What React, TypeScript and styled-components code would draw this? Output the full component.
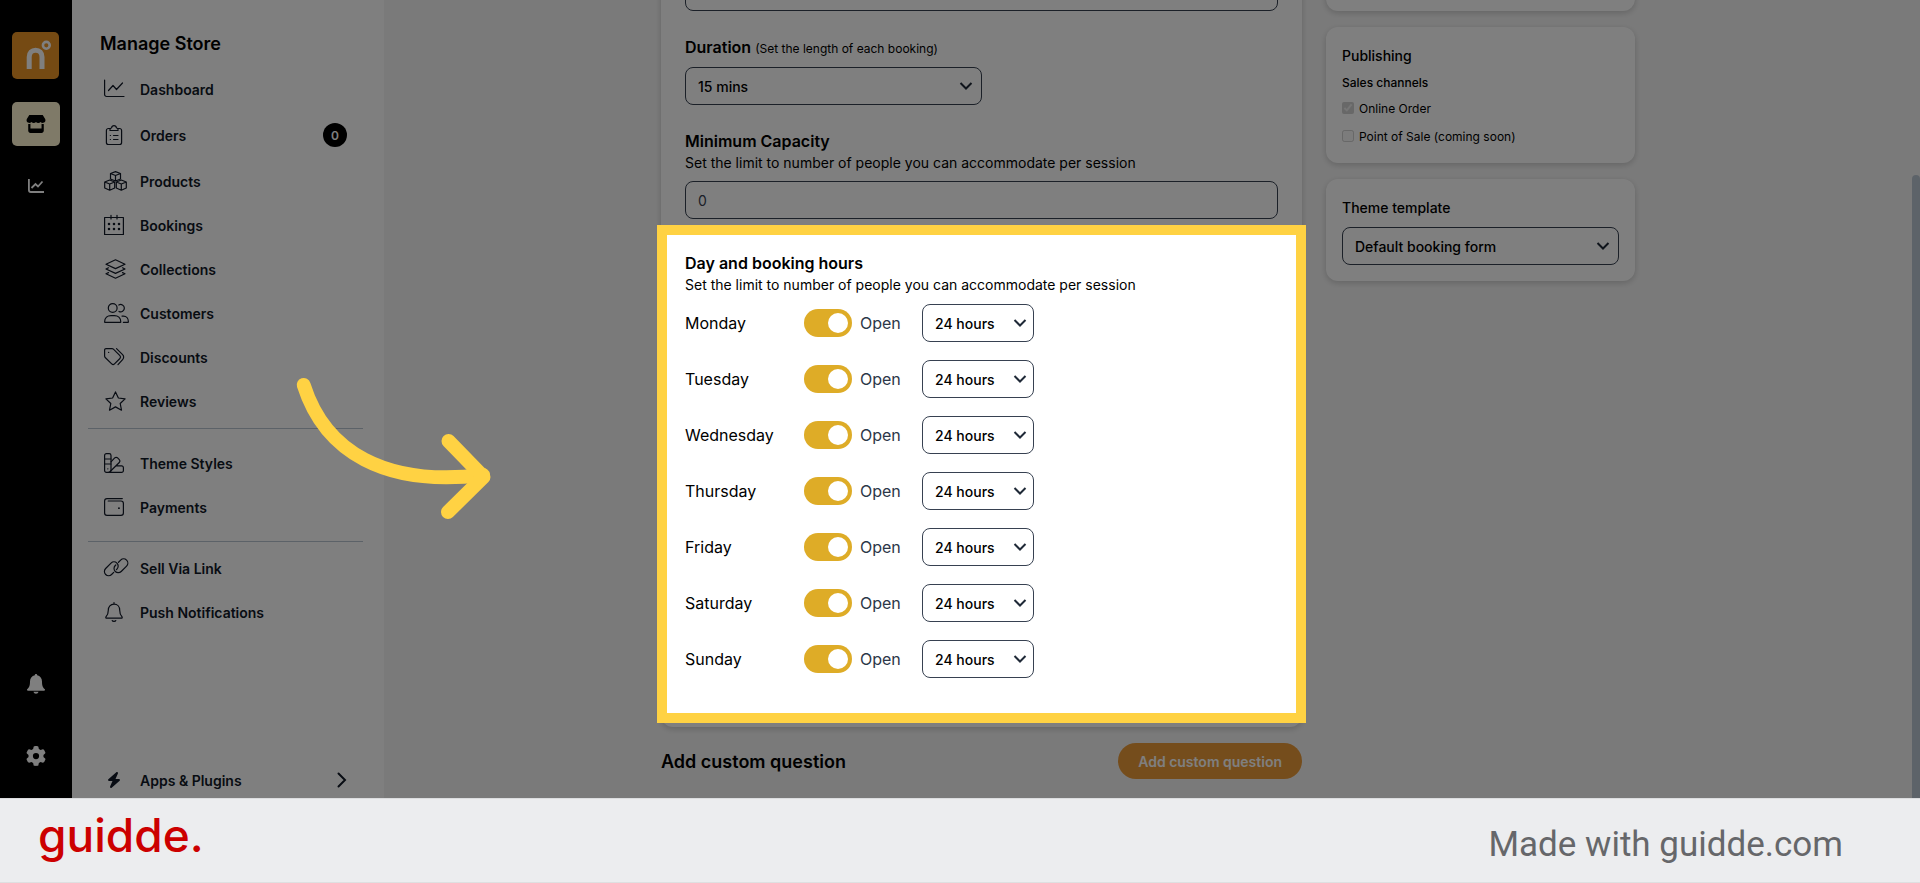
import React from 'react';
import styled, { createGlobalStyle } from 'styled-components';
import { FaGear, FaBolt, FaStore } from 'react-icons/fa6';

const GlobalStyle = createGlobalStyle`
  *, *::before, *::after { box-sizing: border-box; }
  body {
    margin: 0;
    font-family: Inter, "Liberation Sans", sans-serif;
    font-optical-sizing: none;
    color: #000;
    background: #ecedef;
  }
  h1, h2, h3, p { margin: 0; }
  button, input, select { font: inherit; color: inherit; }
  a { color: inherit; text-decoration: none; }
`;

const Page = styled.div`
  display: flex;
  flex-direction: column;
  height: 100vh;
`;

const Store = styled.div`
  position: relative;
  display: flex;
  flex: 1;
  min-height: 0;
  overflow: hidden;
  background: #f5f5f5;
`;

const Rail = styled.nav`
  display: flex;
  flex-direction: column;
  align-items: center;
  width: 72px;
  padding: 32px 0 20px;
  background: #000;
  color: #fff;
`;

const RailLink = styled.a<{ $active?: boolean }>`
  display: grid;
  place-items: center;
  width: 48px;
  height: 44px;
  margin-bottom: 18px;
  border-radius: 5px;
  color: ${p => (p.$active ? '#000' : '#fff')};
  background: ${p => (p.$active ? '#fff5d0' : 'transparent')};
`;

const Brand = styled.a`
  width: 48px;
  height: 48px;
  margin-bottom: 22px;
  svg { display: block; }
`;

const RailFoot = styled.div`
  display: flex;
  flex-direction: column;
  gap: 28px;
  margin-top: auto;
  a { margin: 0; }
`;

const Sidebar = styled.nav`
  display: flex;
  flex-direction: column;
  width: 312px;
  padding: 31px 21px 0 16px;
  background: #fff;
`;

const SideTitle = styled.h2`
  padding-left: 12px;
  margin-bottom: 10px;
  font-size: 18px;
  line-height: 26px;
  font-weight: 600;
`;

const NavItem = styled.a<{ $tall?: boolean }>`
  display: flex;
  align-items: center;
  height: ${p => (p.$tall ? 48 : 44)}px;
  padding: 0 16px;
  font-size: 14px;
  font-weight: 600;
  color: #111827;
`;

const NavIcon = styled.span<{ $inset?: boolean }>`
  display: flex;
  width: 36px;
  padding-left: ${p => (p.$inset ? 2 : 0)}px;
  svg { display: block; overflow: visible; }
`;

const Badge = styled.span`
  display: grid;
  place-items: center;
  width: 24px;
  height: 24px;
  margin-left: auto;
  border-radius: 50%;
  background: #000;
  color: #fff;
  font-size: 12px;
`;

const Rule = styled.hr<{ $wide?: boolean }>`
  width: 100%;
  margin: ${p => (p.$wide ? '12px 0 4px' : '5px 0 12px')};
  border: 0;
  border-top: 1px solid #b9c4d0;
`;

const Apps = styled.div`
  margin-top: auto;
  margin-bottom: -4px;
  a > svg { margin-left: auto; }
`;

const Main = styled.main`
  flex: 1;
  display: flex;
  justify-content: center;
  min-width: 0;
  padding: 0 24px;
`;

const Columns = styled.div`
  display: grid;
  grid-template-columns: minmax(0, 1fr) 309px;
  gap: 24px;
  align-items: start;
  width: 100%;
  max-width: 974px;
  margin-top: -51px;
`;

const Card = styled.section`
  border-radius: 12px;
  background: #fff;
  box-shadow: 0 2px 6px rgba(0, 0, 0, 0.18);
`;

const FormCard = styled(Card)`
  padding: 24px 24px 4px;
`;

const SideStack = styled.aside`
  display: flex;
  flex-direction: column;
  gap: 16px;
`;

const SideCard = styled(Card)`
  padding: 18px 16px 13px;
`;

const TopCard = styled(Card)`
  height: 62px;
`;

const Field = styled.div`
  display: flex;
  flex-direction: column;
  margin-bottom: 24px;
  &:last-of-type { margin-bottom: 6px; }
`;

const Label = styled.label`
  font-size: 16px;
  line-height: 24px;
  font-weight: 600;
`;

const Small = styled.span`
  font-size: 12px;
  font-weight: 400;
`;

const Hint = styled.p`
  margin-bottom: 8px;
  font-size: 14px;
  line-height: 20px;
`;

const controlBox = `
  height: 38px;
  border: 1px solid #374151;
  border-radius: 8px;
  background: #fff;
  font-size: 14px;
  outline: none;
`;

const TextInput = styled.input`
  ${controlBox}
  width: 100%;
  padding: 0 12px;
  color: #374151;
`;

const SelectWrap = styled.div<{ $width: string; $compact?: boolean }>`
  display: grid;
  align-items: center;
  width: ${p => p.$width};
  select, svg { grid-area: 1 / 1; }
  svg {
    justify-self: end;
    margin-right: ${p => (p.$compact ? 7 : 9)}px;
    pointer-events: none;
  }
  ${Label} + & { margin-top: 6px; }
`;

const SelectBox = styled.select`
  ${controlBox}
  appearance: none;
  width: 100%;
  padding: 0 28px 0 12px;
  font-weight: 500;
`;

const Spotlight = styled.section`
  position: relative;
  z-index: 1;
  margin: 0 -28px;
  padding: 16px 18px 35px;
  border: 10px solid #ffd243;
  background: #fff;
  box-shadow: 0 0 0 4000px rgba(0, 0, 0, 0.5);
`;

const SpotTitle = styled.h3`
  font-size: 16px;
  line-height: 24px;
  font-weight: 600;
`;

const Days = styled.div`
  display: flex;
  flex-direction: column;
  gap: 18px;
  margin-top: 9px;
`;

const DayRow = styled.div`
  display: grid;
  grid-template-columns: 119px 118px 112px;
  align-items: center;
  font-size: 16px;
`;

const ToggleLabel = styled.label`
  display: flex;
  align-items: center;
  gap: 8px;
  color: #2d3748;
`;

const Toggle = styled.input`
  appearance: none;
  display: flex;
  align-items: center;
  width: 48px;
  height: 28px;
  margin: 0;
  padding: 4px;
  border-radius: 14px;
  background: #a0a0a0;
  &::before {
    content: '';
    width: 20px;
    height: 20px;
    border-radius: 50%;
    background: #fff;
  }
  &:checked { justify-content: flex-end; background: #deac27; }
`;

const QuestionBar = styled.div`
  display: flex;
  align-items: center;
  justify-content: space-between;
  margin-top: 16px;
`;

const QuestionTitle = styled.h2`
  font-size: 18px;
  font-weight: 600;
`;

const AddButton = styled.button`
  height: 36px;
  padding: 0 20px;
  border: 0;
  border-radius: 18px;
  background: #ea9a38;
  color: #fff;
  font-size: 14px;
  font-weight: 600;
`;

const CardTitle = styled.h3`
  font-size: 14px;
  line-height: 22px;
  font-weight: 500;
`;

const SubTitle = styled.p`
  margin: 7px 0 2px;
  font-size: 12px;
  line-height: 18px;
  font-weight: 500;
`;

const CheckRow = styled.label`
  display: flex;
  align-items: center;
  gap: 5px;
  height: 28px;
  font-size: 12px;
  input { width: 12px; height: 12px; margin: 0; }
`;

const TemplateSelect = styled.div`
  margin: 8px 0 3px;
`;

const ScrollTrack = styled.div`
  display: flex;
  width: 8px;
  padding-top: 175px;
`;

const ScrollThumb = styled.div`
  flex: 1;
  border-radius: 4px 4px 0 0;
  background: #bbc6d2;
`;

const Pointer = styled.svg`
  position: absolute;
  z-index: 2;
  left: 290px;
  top: 370px;
`;

const Footer = styled.footer`
  position: relative;
  z-index: 3;
  display: flex;
  align-items: center;
  justify-content: space-between;
  height: 85px;
  padding: 0 77px 0 38px;
  border-top: 1px solid #dcdddf;
  border-bottom: 1px solid #dedfe0;
  background: #ecedef;
`;

const GuiddeMark = styled.a`
  margin-bottom: 12px;
  font-size: 46px;
  line-height: 56px;
  font-weight: 500;
  && { color: #c00; }
`;

const Credit = styled.p`
  margin-top: 8px;
  font-family: Roboto, sans-serif;
  font-size: 35px;
  line-height: 42px;
  color: #66676a;
`;

type LineIconProps = { width?: number; children: React.ReactNode };

function LineIcon({ width = 20, children }: LineIconProps) {
  return (
    <svg width={width} height="20" viewBox={`0 0 ${width} 20`} fill="none" stroke="currentColor"
      strokeWidth="1.2" strokeLinecap="round" strokeLinejoin="round" aria-hidden="true">
      {children}
    </svg>
  );
}

const icons = {
  dashboard: <LineIcon><path d="M.6 1v14.5a2 2 0 0 0 2 2H20M4.500 11.500l4.500-5 3.500 4 6-6.500" /></LineIcon>,
  orders: (
    <LineIcon>
      <path d="M6.500 3.500H4.400a2 2 0 0 0-2 2v12a2 2 0 0 0 2 2h11.200a2 2 0 0 0 2-2v-12a2 2 0 0 0-2-2h-2.100" />
      <path d="M6 5.500h8v-1a1.500 1.500 0 0 0-1.500-1.500C12.200 1.500 11.300.7 10 .7S7.800 1.500 7.500 3A1.500 1.500 0 0 0 6 4.500z" />
      <path d="M9.500 10.500H14M9.500 14.500H14M6.300 10.500h.2M6.300 14.500h.2" />
    </LineIcon>
  ),
  products: (
    <LineIcon width={23}>
      <path d="M11.500.6l5 1.900v5.500l-5 2-5-2V2.500zM6.500 2.500l5 2 5-2M11.500 4.500V10" />
      <path d="M5.700 9l5 2v6l-5 2.200-5-2.200v-6zM.7 11l5 2 5-2M5.700 13v6" />
      <path d="M17.300 9l5 2v6l-5 2.200-5-2.200v-6zM12.300 11l5 2 5-2M17.300 13v6" />
    </LineIcon>
  ),
  bookings: (
    <LineIcon>
      <path d="M.6 2.500h18.800v17H.6zM7 .3V4M13 .3V4" />
      <path strokeWidth="2.600" d="M5 9h.01M10 9h.01M15 9h.01M5 14h.01M10 14h.01M15 14h.01" />
    </LineIcon>
  ),
  collections: (
    <LineIcon width={23}>
      <path d="M11.500.8l9.500 4.400-9.500 4.400L2 5.200zM4.500 8.800L2 10l9.500 4.400L21 10l-2.500-1.200M4.500 13.600L2 14.800l9.500 4.400 9.500-4.400-2.500-1.200" />
    </LineIcon>
  ),
  customers: (
    <LineIcon width={25}>
      <circle cx="8.700" cy="5" r="4.400" />
      <path d="M.6 19c0-4 2.900-6.400 6.400-6.400h3.400c3.500 0 6.400 2.400 6.400 6.400 0 .3-.2.4-.5.4H1c-.3 0-.4-.1-.4-.4zM14.800 2a3.700 3.700 0 1 1 .2 6.500M18 13.100h1.500c2.800 0 4.900 2.300 4.900 5.700 0 .4-.2.600-.5.600h-4.500" />
    </LineIcon>
  ),
  discounts: (
    <LineIcon>
      <path d="M.6 3v6c0 .6.200 1.100.6 1.500l6.500 6.400c.8.8 2 .8 2.800 0l5.400-5.400c.8-.8.8-2 0-2.800L9.400 2.200A2 2 0 0 0 8 1.600H2A1.400 1.400 0 0 0 .6 3zM4.600 5.400h.1" />
      <path d="M12.500 1.600l6.100 6a3.500 3.500 0 0 1 0 5L14 17.600" />
    </LineIcon>
  ),
  reviews: (
    <LineIcon width={23}>
      <path d="M11.500.9l2.900 6.100 6.700.9-4.900 4.600 1.300 6.700-6-3.300-6 3.300 1.300-6.700L1.900 7.900l6.700-.9z" />
    </LineIcon>
  ),
  styles: (
    <LineIcon>
      <rect x=".6" y=".6" width="6.400" height="18.800" rx="1.800" />
      <path d="M.6 6H7M.6 11H7M7 8.800l3.700-3.900a2 2 0 0 1 2.900 0l1.700 1.800a2 2 0 0 1 0 2.800L5.400 19.200M12.200 12.900h5.400a1.800 1.800 0 0 1 1.800 1.800v2.900a1.800 1.800 0 0 1-1.800 1.800H4.500M3.800 15.800h.1" />
    </LineIcon>
  ),
  payments: (
    <LineIcon>
      <path d="M18.300 1.600H3A2.400 2.400 0 0 0 .6 4v12A2.400 2.400 0 0 0 3 18.400h14a2.400 2.400 0 0 0 2.400-2.400V6.400A2.400 2.400 0 0 0 17 4H4.200" />
      <path strokeWidth="1.800" d="M14.900 11.200h.1" />
    </LineIcon>
  ),
  link: (
    <LineIcon width={24}>
      <g transform="translate(7.300 10.800) rotate(-45)">
        <path d="M-.8 4.200H-3.800A4.200 4.200 0 0 1-3.800-4.200H3.800A4.200 4.200 0 0 1 3.800 4.200H3" />
        <path d="M9.700.5H12.700A4.200 4.200 0 0 1 12.700 8.900H5.100A4.200 4.200 0 0 1 5.100.5H5.900" />
      </g>
    </LineIcon>
  ),
  push: (
    <LineIcon>
      <path d="M10 .6v1.600M10 2.200c-3.500 0-5.700 2.600-5.700 6 0 3.200-.6 4.600-2.200 6.500-.6.700-.3 1.500.6 1.500h14.600c.9 0 1.200-.8.6-1.500-1.600-1.900-2.200-3.300-2.200-6.500 0-3.400-2.200-6-5.700-6zM8.200 18.500c.4 1.200 3.200 1.200 3.600 0" />
    </LineIcon>
  ),
};

type Item = { label: string; icon: React.ReactNode; badge?: string };

const storeItems: Item[] = [
  { label: 'Dashboard', icon: icons.dashboard },
  { label: 'Orders', icon: icons.orders, badge: '0' },
  { label: 'Products', icon: icons.products },
  { label: 'Bookings', icon: icons.bookings },
  { label: 'Collections', icon: icons.collections },
  { label: 'Customers', icon: icons.customers },
  { label: 'Discounts', icon: icons.discounts },
  { label: 'Reviews', icon: icons.reviews },
];
const setupItems: Item[] = [
  { label: 'Theme Styles', icon: icons.styles },
  { label: 'Payments', icon: icons.payments },
];
const shareItems: Item[] = [
  { label: 'Sell Via Link', icon: icons.link },
  { label: 'Push Notifications', icon: icons.push },
];
const days = ['Monday', 'Tuesday', 'Wednesday', 'Thursday', 'Friday', 'Saturday', 'Sunday'];

function NavList({ items }: { items: Item[] }) {
  return (
    <>
      {items.map(item => (
        <NavItem key={item.label} href="#" $tall={!!item.badge}>
          <NavIcon>{item.icon}</NavIcon>
          {item.label}
          {item.badge && <Badge>{item.badge}</Badge>}
        </NavItem>
      ))}
    </>
  );
}

type SelectProps = { id?: string; label?: string; width: string; option: string; compact?: boolean };

function Select({ id, label, width, option, compact }: SelectProps) {
  return (
    <SelectWrap $width={width} $compact={compact}>
      <SelectBox id={id} aria-label={label}>
        <option>{option}</option>
      </SelectBox>
      <svg width="14" height="10" viewBox="0 0 14 10" fill="none" stroke="#1f2937" strokeWidth="2" aria-hidden="true">
        <path d="M1.500 2L7 7.500 12.500 2" />
      </svg>
    </SelectWrap>
  );
}

export default function App() {
  return (
    <>
      <GlobalStyle />
      <Page>
        <Store>
          <Rail aria-label="Main">
            <Brand href="#" aria-label="Home">
              <svg width="48" height="48" viewBox="0 0 48 48" fill="none" stroke="#fff">
                <rect width="47" height="47" rx="5" fill="#ea9426" stroke="none" />
                <path d="M17.200 37V25c0-4.200 2.600-6.800 6.400-6.800S30 20.800 30 25v12" strokeWidth="5" />
                <circle cx="34.300" cy="13.300" r="3.400" strokeWidth="2.600" />
              </svg>
            </Brand>
            <RailLink href="#" $active aria-label="Store"><FaStore size={20} /></RailLink>
            <RailLink href="#" aria-label="Analytics">
              <svg width="16" height="14" viewBox="0 0 16 14" fill="none" stroke="currentColor" strokeWidth="1.800">
                <path d="M.9 0v11a2 2 0 0 0 2 2H16M3.500 9l4-4 2.500 2.500L14.500 2.500" />
              </svg>
            </RailLink>
            <RailFoot>
              <RailLink href="#" aria-label="Notifications">
                <svg width="18" height="20" viewBox="0 0 18 20" fill="currentColor">
                  <path d="M9 0c.7 0 1.200.5 1.200 1.300 3 .6 4.800 3 4.800 6.200 0 4.300.8 6 2.600 7.500.8.700.4 1.700-.6 1.700H1c-1 0-1.400-1-.6-1.700C2.200 13.500 3 11.800 3 7.500c0-3.200 1.800-5.600 4.800-6.200C7.800.5 8.300 0 9 0zM6.500 17.800h5c-.2 1.300-1.200 2-2.500 2s-2.300-.7-2.500-2z" />
                </svg>
              </RailLink>
              <RailLink href="#" aria-label="Settings"><FaGear size={20} /></RailLink>
            </RailFoot>
          </Rail>

          <Sidebar aria-label="Manage Store">
            <SideTitle>Manage Store</SideTitle>
            <NavList items={storeItems} />
            <Rule />
            <NavList items={setupItems} />
            <Rule $wide />
            <NavList items={shareItems} />
            <Apps>
              <NavItem href="#">
                <NavIcon $inset><FaBolt size={16} /></NavIcon>
                Apps &amp; Plugins
                <svg width="10" height="16" viewBox="0 0 10 16" fill="none" stroke="currentColor" strokeWidth="2" strokeLinecap="round">
                  <path d="M1.500 1.500L8 8l-6.500 6.500" />
                </svg>
              </NavItem>
            </Apps>
          </Sidebar>

          <Main>
            <Columns>
              <div>
                <FormCard>
                  <Field>
                    <TextInput aria-label="Booking name" />
                  </Field>
                  <Field>
                    <Label htmlFor="duration">Duration <Small>(Set the length of each booking)</Small></Label>
                    <Select id="duration" width="50%" option="15 mins" />
                  </Field>
                  <Field>
                    <Label htmlFor="capacity">Minimum Capacity</Label>
                    <Hint>Set the limit to number of people you can accommodate per session</Hint>
                    <TextInput id="capacity" defaultValue="0" />
                  </Field>
                  <Spotlight>
                    <SpotTitle>Day and booking hours</SpotTitle>
                    <Hint>Set the limit to number of people you can accommodate per session</Hint>
                    <Days>
                      {days.map(day => (
                        <DayRow key={day}>
                          <span>{day}</span>
                          <ToggleLabel>
                            <Toggle type="checkbox" defaultChecked />
                            Open
                          </ToggleLabel>
                          <Select label={`${day} hours`} width="100%" option="24 hours" compact />
                        </DayRow>
                      ))}
                    </Days>
                  </Spotlight>
                </FormCard>
                <QuestionBar>
                  <QuestionTitle>Add custom question</QuestionTitle>
                  <AddButton type="button">Add custom question</AddButton>
                </QuestionBar>
              </div>

              <SideStack>
                <TopCard />
                <SideCard>
                  <CardTitle>Publishing</CardTitle>
                  <SubTitle>Sales channels</SubTitle>
                  <CheckRow><input type="checkbox" defaultChecked disabled />Online Order</CheckRow>
                  <CheckRow><input type="checkbox" disabled />Point of Sale (coming soon)</CheckRow>
                </SideCard>
                <SideCard>
                  <CardTitle>Theme template</CardTitle>
                  <TemplateSelect>
                    <Select label="Theme template" width="100%" option="Default booking form" />
                  </TemplateSelect>
                </SideCard>
              </SideStack>
            </Columns>
          </Main>

          <ScrollTrack>
            <ScrollThumb />
          </ScrollTrack>

          <Pointer width="210" height="160" viewBox="290 370 210 160" fill="none" stroke="#ffd243"
            strokeWidth="14" strokeLinecap="round" strokeLinejoin="round" aria-hidden="true">
            <path d="M303.700 385C325 452 385 487 483 475" />
            <path d="M448.500 441L483.500 477 448 512" />
          </Pointer>
        </Store>

        <Footer>
          <GuiddeMark href="#">guidde.</GuiddeMark>
          <Credit>Made with guidde.com</Credit>
        </Footer>
      </Page>
    </>
  );
}
